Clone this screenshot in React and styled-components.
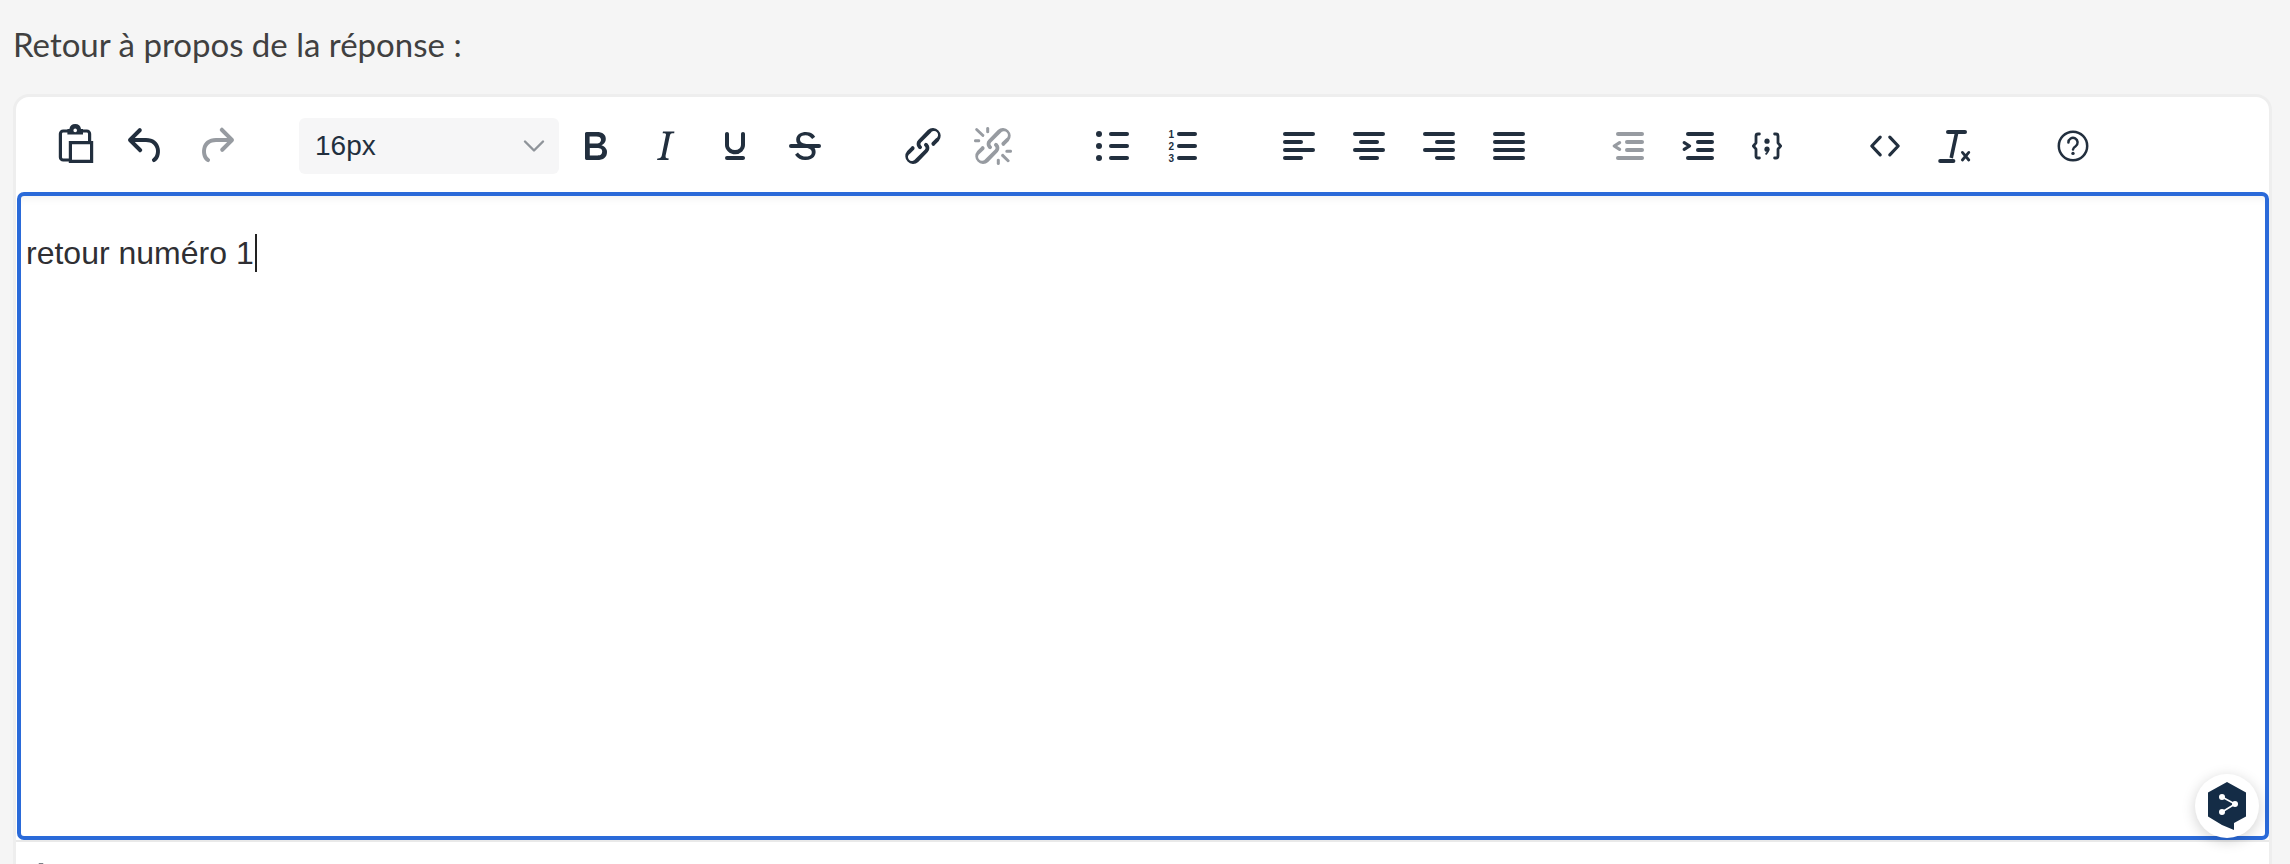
import React from "react";
import styled, { createGlobalStyle } from "styled-components";

const Global = createGlobalStyle`
  html, body { margin: 0; height: 100%; overflow: hidden; background: #f5f5f5; }
  #root { height: 100%; }
`;
const Page = styled.div`
  height: 864px; overflow: hidden; box-sizing: border-box; padding: 26px 18px 0 13px;
`;
const Label = styled.div`
  font: 400 33px/36px Lato, sans-serif; color: #404040; height: 68px;
`;
const Card = styled.div`
  background: #fff; border: 3px solid #eeeeee; border-radius: 16px; height: 900px;
`;
const Toolbar = styled.div`
  display: flex; align-items: center; height: 95px; padding: 3px 0 0 25px; box-sizing: border-box;
`;
const Group = styled.div`
  display: flex; align-items: center; margin-right: 48px;
`;
const Btn = styled.div`
  width: 70px; height: 56px; display: flex; align-items: center; justify-content: center;
  color: ${(p) => (p.$muted ? "#979ba1" : "#222f3e")};
`;
const Select = styled.div`
  width: 260px; height: 56px; margin-right: 1px; background: #f6f6f7; border-radius: 6px; display: flex; align-items: center;
  justify-content: space-between; box-sizing: border-box; padding: 0 14px 0 16px;
  font: 400 28px "Liberation Sans", sans-serif; color: #222f3e;
`;
const Editor = styled.div`
  position: relative; height: 648px; margin-left: 1px; box-sizing: border-box; border: 4px solid #2a6ad9; border-radius: 7px;
  box-shadow: inset 0 10px 10px -8px rgba(0, 0, 0, 0.06);
  padding: 37px 5px 0; font: 400 32px/40px "Liberation Sans", sans-serif; color: #2f2f33;
  display: flex; align-items: flex-start;
`;
const Caret = styled.span`
  display: inline-block; width: 2px; height: 38px; margin: 1px 0 0 1px; background: #222;
`;
const Badge = styled.div`
  position: absolute; right: 6px; bottom: -2px; width: 64px; height: 64px; border-radius: 50%; background: #fff;
  box-shadow: 0 3px 14px rgba(0, 0, 0, 0.18); display: flex; align-items: center; justify-content: center;
`;
const StatusBar = styled.div`
  border-top: 2px solid #e9e9e9; height: 60px; box-sizing: border-box; padding: 20px 0 0 18px;
  color: #7b8086;
`;

const Icon = ({ children }) => (
  <svg width="48" height="48" viewBox="0 0 24 24" fill="currentColor" aria-hidden="true">{children}</svg>
);
const Bar = ({ x, y, w }) => <rect x={x} y={y} width={w} height="2" rx="1" />;

const icons = {
  paste: (
    <>
      <path fill="none" stroke="currentColor" strokeWidth="1.6" strokeLinejoin="round" d="M8 4.5H5.6a1.4 1.4 0 0 0-1.4 1.4v11.7a1.4 1.4 0 0 0 1.4 1.4h3.4M15 4.5h2.4a1.4 1.4 0 0 1 1.4 1.4V10" />
      <path fill="none" stroke="currentColor" strokeWidth="1.6" d="M9.2 10.3h10.6v9.4H9.2z" />
      <path fillRule="evenodd" d="M11.6 1a3 3 0 0 1 2.9 2.5h1v2.8H7.7V3.5h1A3 3 0 0 1 11.6 1zm0 2.3a.9.9 0 1 0 0 1.8.9.9 0 0 0 0-1.8z" />
    </>
  ),
  undo: <path d="M6.4 8H12c3.7 0 6.2 2 6.8 5.1.6 2.7-.4 5.6-2.3 6.8a1 1 0 0 1-1-1.8c1.1-.7 1.8-2.7 1.4-4.6-.5-2.1-2.1-3.5-4.9-3.5H6.4l3.3 3.3a1 1 0 1 1-1.4 1.4l-5-5a1 1 0 0 1 0-1.4l5-5a1 1 0 0 1 1.4 1.4L6.4 8z" />,
  redo: <path d="M17.6 10H12c-2.8 0-4.4 1.4-4.9 3.5-.4 2 .3 3.9 1.4 4.6a1 1 0 1 1-1 1.8c-1.9-1.2-2.9-4.1-2.3-6.8.6-3 3-5.1 6.8-5.1h5.6l-3.3-3.3a1 1 0 1 1 1.4-1.4l5 5a1 1 0 0 1 0 1.4l-5 5a1 1 0 0 1-1.4-1.4l3.3-3.3z" />,
  bold: <path d="M7.8 19c-.3 0-.5 0-.6-.2l-.2-.5V5.7c0-.2 0-.4.2-.5l.6-.2h5c1.5 0 2.7.3 3.5 1 .7.6 1.1 1.4 1.1 2.5a3 3 0 0 1-.6 1.9c-.4.6-1 1-1.6 1.2.4.1.9.3 1.3.6s.8.7 1 1.2c.4.4.5 1 .5 1.6 0 1.3-.4 2.3-1.3 3-.8.7-2.1 1-3.8 1H7.8zm5-8.3c.6 0 1.2-.1 1.6-.5.4-.3.6-.7.6-1.3 0-1.1-.8-1.7-2.3-1.7H9.3v3.5h3.4zm.5 6c.7 0 1.3-.1 1.7-.4.4-.4.6-.9.6-1.5s-.2-1-.7-1.4c-.4-.3-1-.4-2-.4H9.4v3.8h4z" />,
  italic: <path d="M16.7 4.7l-.1.9h-.3c-.6 0-1 0-1.4.3-.3.3-.4.6-.5 1.1l-2.1 9.8v.6c0 .5.4.8 1.4.8h.2l-.2.8H8l.2-.8h.2c1.1 0 1.8-.5 2-1.5l2-9.8.1-.5c0-.6-.4-.8-1.4-.8h-.3l.2-.9h5.8z" />,
  underline: <path d="M16 5c.6 0 1 .4 1 1v5.5a4 4 0 0 1-.4 1.8l-1 1.4a5.3 5.3 0 0 1-5.5 1 5 5 0 0 1-1.6-1c-.5-.4-.8-.9-1.1-1.4a4 4 0 0 1-.4-1.8V6c0-.6.4-1 1-1s1 .4 1 1v5.5c0 .3 0 .6.2 1l.6.7a3.3 3.3 0 0 0 2.2.8 3.4 3.4 0 0 0 2.2-.8c.3-.2.4-.5.6-.8l.2-.9V6c0-.6.4-1 1-1zM8 17h8c.6 0 1 .4 1 1s-.4 1-1 1H8a1 1 0 0 1 0-2z" />,
  strike: (
    <>
      <path d="M15.6 8.5c-.5-.7-1-1.1-1.3-1.3-.6-.4-1.3-.6-2-.6-2.7 0-2.8 1.7-2.8 2.1 0 1.6 1.8 2 3.2 2.3 4.4.9 4.6 2.8 4.6 3.9 0 1.4-.7 4.1-5 4.1A6.2 6.2 0 0 1 7 16.4l1.5-1.1c.4.6 1.6 2 3.7 2 1.6 0 2.5-.4 3-1.2.4-.8.3-2-.8-2.6-.7-.4-1.6-.7-2.9-1-1-.2-3.9-.8-3.9-3.6C7.6 6 10.3 5 12.4 5c2.9 0 4.2 1.6 4.7 2.4l-1.5 1.1z" />
      <path d="M5 11h14a1 1 0 0 1 0 2H5a1 1 0 0 1 0-2z" />
    </>
  ),
  link: <path d="M6.2 12.3a1 1 0 0 1 1.4 1.4l-2 2a2 2 0 1 0 2.6 2.8l4.8-4.8a1 1 0 0 0 0-1.4 1 1 0 1 1 1.4-1.3 2.9 2.9 0 0 1 0 4L9.6 20a3.9 3.9 0 0 1-5.5-5.5l2-2zm11.6-.6a1 1 0 0 1-1.4-1.4l2-2a2 2 0 1 0-2.6-2.8L11 10.3a1 1 0 0 0 0 1.4A1 1 0 1 1 9.6 13a2.9 2.9 0 0 1 0-4L14.4 4a3.9 3.9 0 0 1 5.5 5.5l-2 2z" />,
  unlink: <path d="M6.2 12.3a1 1 0 0 1 1.4 1.4l-2.1 2a2 2 0 1 0 2.7 2.8l4.8-4.8a1 1 0 0 0 0-1.4 1 1 0 1 1 1.4-1.3 2.9 2.9 0 0 1 0 4L9.6 20a3.9 3.9 0 0 1-5.5-5.5l2-2zm11.6-.6a1 1 0 0 1-1.4-1.4l2.1-2a2 2 0 1 0-2.7-2.8L11 10.3a1 1 0 0 0 0 1.4A1 1 0 1 1 9.6 13a2.9 2.9 0 0 1 0-4L14.4 4a3.9 3.9 0 0 1 5.5 5.5l-2 2zM7.6 6.3a.8.8 0 0 1-1 1.1L3.3 4.2a.7.7 0 1 1 1-1l3.2 3.1zM5.1 8.6a.8.8 0 0 1 0 1.5H3a.8.8 0 0 1 0-1.5H5zm5-3.5a.8.8 0 0 1-1.5 0V3a.8.8 0 0 1 1.5 0v2zm6 11.8a.8.8 0 0 1 1-1l3.2 3.2a.8.8 0 0 1-1 1L16 17zm-2.2 2a.8.8 0 0 1 1.5 0V21a.8.8 0 0 1-1.5 0V19zm5-3.5a.7.7 0 1 1 0-1.5H21a.8.8 0 0 1 0 1.5H19z" />,
  bullist: (
    <>
      <Bar x="11" y="5" w="10" /><Bar x="11" y="11" w="10" /><Bar x="11" y="17" w="10" />
      <circle cx="6" cy="6" r="1.5" /><circle cx="6" cy="12" r="1.5" /><circle cx="6" cy="18" r="1.5" />
    </>
  ),
  numlist: (
    <>
      <Bar x="10" y="5" w="10" /><Bar x="10" y="11" w="10" /><Bar x="10" y="17" w="10" />
      <text x="5.8" y="7.9" fontSize="5" fontWeight="700" fontFamily="Liberation Sans, sans-serif">1</text>
      <text x="5.8" y="13.9" fontSize="5" fontWeight="700" fontFamily="Liberation Sans, sans-serif">2</text>
      <text x="5.8" y="19.9" fontSize="5" fontWeight="700" fontFamily="Liberation Sans, sans-serif">3</text>
    </>
  ),
  alignLeft: (<><Bar x="4" y="5" w="16" /><Bar x="4" y="9" w="10" /><Bar x="4" y="13" w="16" /><Bar x="4" y="17" w="10" /></>),
  alignCenter: (<><Bar x="4" y="5" w="16" /><Bar x="7" y="9" w="10" /><Bar x="4" y="13" w="16" /><Bar x="7" y="17" w="10" /></>),
  alignRight: (<><Bar x="4" y="5" w="16" /><Bar x="10" y="9" w="10" /><Bar x="4" y="13" w="16" /><Bar x="10" y="17" w="10" /></>),
  alignJustify: (<><Bar x="4" y="5" w="16" /><Bar x="4" y="9" w="16" /><Bar x="4" y="13" w="16" /><Bar x="4" y="17" w="16" /></>),
  outdent: (
    <>
      <Bar x="6.5" y="5" w="14" /><Bar x="11" y="9" w="9.5" /><Bar x="11" y="13" w="9.5" /><Bar x="6.5" y="17" w="14" />
      <path fill="none" stroke="currentColor" strokeWidth="1.6" strokeLinecap="round" strokeLinejoin="round" d="M8.3 10.3 5.6 12l2.7 1.7" />
    </>
  ),
  indent: (
    <>
      <Bar x="6.5" y="5" w="14" /><Bar x="11.5" y="9" w="9" /><Bar x="11.5" y="13" w="9" /><Bar x="6.5" y="17" w="14" />
      <path fill="none" stroke="currentColor" strokeWidth="1.6" strokeLinecap="round" strokeLinejoin="round" d="M5.6 10.3 8.3 12l-2.7 1.7" />
    </>
  ),
  codeSample: (
    <>
      <path fill="none" stroke="currentColor" strokeWidth="1.4" strokeLinecap="round" strokeLinejoin="round" d="M8.2 6h-.7a1 1 0 0 0-1 1v3.4L5.2 12l1.3 1.6V17a1 1 0 0 0 1 1h.7M15.8 6h.7a1 1 0 0 1 1 1v3.4l1.3 1.6-1.3 1.6V17a1 1 0 0 1-1 1h-.7" />
      <circle cx="12" cy="9.6" r="1.3" />
      <circle cx="12" cy="13.6" r="1.3" />
      <path fill="none" stroke="currentColor" strokeWidth="1" strokeLinecap="round" d="M12.6 13.8c0 1-.4 1.7-1 2.1" />
    </>
  ),
  source: <path fill="none" stroke="currentColor" strokeWidth="1.6" strokeLinecap="round" strokeLinejoin="round" d="M9.6 7.6 5.4 12l4.2 4.4M14.4 7.6l4.2 4.4-4.2 4.4" />,
  removeFormat: (
    <>
      <Bar x="7.5" y="4" w="10.5" />
      <path fill="none" stroke="currentColor" strokeWidth="1.8" d="M12.9 5 10.1 18" />
      <Bar x="3.6" y="18.5" w="8.6" />
      <path fill="none" stroke="currentColor" strokeWidth="1.4" strokeLinecap="round" d="M15.7 15.2l3.2 3.8M18.9 15.2l-3.2 3.8" />
    </>
  ),
  help: (
    <>
      <circle cx="12" cy="12" r="7.1" fill="none" stroke="currentColor" strokeWidth="1.25" />
      <path fill="none" stroke="currentColor" strokeWidth="1.25" strokeLinecap="round" d="M9.7 10.2a2.3 2.3 0 1 1 3.6 1.9c-.8.5-1.3.9-1.3 1.7" />
      <circle cx="12" cy="15.7" r=".85" />
    </>
  ),
};

const Tool = ({ name, muted }) => (
  <Btn $muted={muted}><Icon>{icons[name]}</Icon></Btn>
);

export default function App() {
  return (
    <Page>
      <Global />
      <Label>Retour à propos de la réponse :</Label>
      <Card>
        <Toolbar>
          <Group>
            <Tool name="paste" /><Tool name="undo" /><Tool name="redo" muted />
          </Group>
          <Select>
            <span>16px</span>
            <svg width="22" height="14" viewBox="0 0 22 14" fill="none" stroke="#8f949a" strokeWidth="2.4" strokeLinecap="round" strokeLinejoin="round"><path d="M2 2.5l9 9 9-9" /></svg>
          </Select>
          <Group>
            <Tool name="bold" /><Tool name="italic" /><Tool name="underline" /><Tool name="strike" />
          </Group>
          <Group>
            <Tool name="link" /><Tool name="unlink" muted />
          </Group>
          <Group>
            <Tool name="bullist" /><Tool name="numlist" />
          </Group>
          <Group>
            <Tool name="alignLeft" /><Tool name="alignCenter" /><Tool name="alignRight" /><Tool name="alignJustify" />
          </Group>
          <Group>
            <Tool name="outdent" muted /><Tool name="indent" /><Tool name="codeSample" />
          </Group>
          <Group>
            <Tool name="source" /><Tool name="removeFormat" />
          </Group>
          <Group>
            <Tool name="help" />
          </Group>
        </Toolbar>
        <Editor>
          <span>retour numéro 1</span><Caret />
          <Badge>
            <svg width="38" height="48" viewBox="0 0 38 48">
              <path fill="#142c46" d="M19 0l19 10.5v24L26 41v7l-12-5-14-8.500v-24z" />
              <path fill="none" stroke="#fff" strokeWidth="1.6" d="M14 15l13 7-13 8" />
              <circle cx="14" cy="15" r="3" fill="#fff" /><circle cx="27" cy="22" r="3" fill="#fff" /><circle cx="14" cy="30" r="3" fill="#fff" />
            </svg>
          </Badge>
        </Editor>
        <StatusBar>
          <svg width="14" height="14" viewBox="0 0 14 14" fill="currentColor"><path d="M1 3h3l1-2h4l1 2h3v10H1z" /></svg>
        </StatusBar>
      </Card>
    </Page>
  );
}
